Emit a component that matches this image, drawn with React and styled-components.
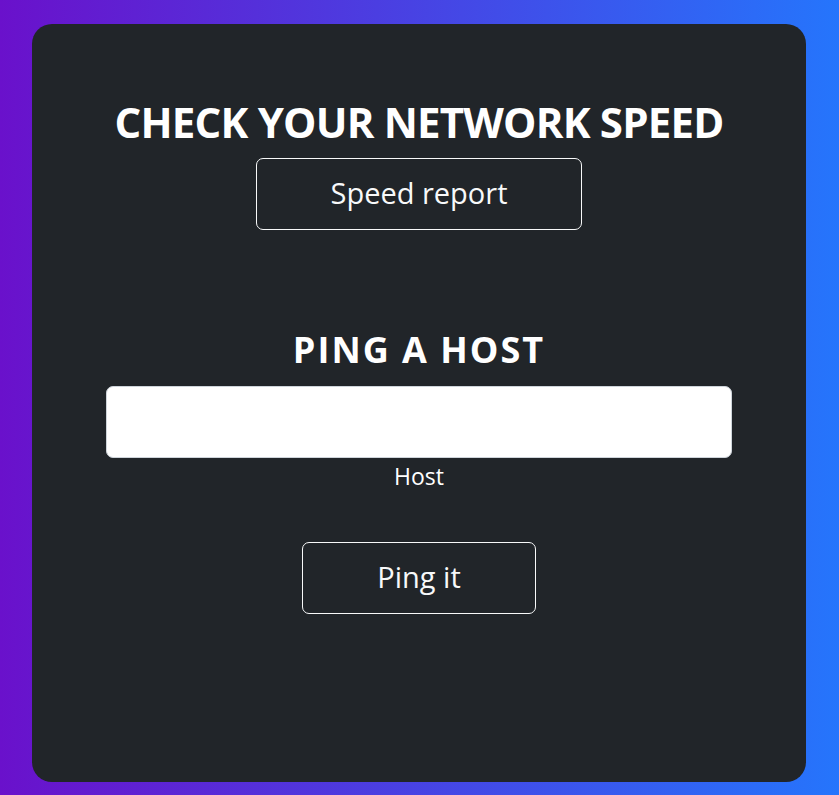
import React from "react";
import styled, { createGlobalStyle } from "styled-components";

const Global = createGlobalStyle`
  html, body { margin: 0; padding: 0; }
  body {
    font-family: "Open Sans", "Noto Sans", sans-serif;
    background: linear-gradient(90deg, #6a11cb 0%, #2575fc 100%);
    min-height: 795px;
  }
  * { box-sizing: border-box; }
`;

const Page = styled.div`
  min-height: 795px;
  padding: 24px 33px 13px 32px;
  display: flex;
`;

const Card = styled.main`
  flex: 1;
  height: 758px;
  background: #212529;
  border-radius: 20px;
  display: flex;
  flex-direction: column;
  align-items: center;
  padding: 73px 74px 0;
  color: #fff;
`;

const Title = styled.h1`
  margin: 0;
  font-weight: 700;
  font-size: ${(p) => p.$size}px;
  line-height: 1.2;
  letter-spacing: ${(p) => p.$ls}px;
  text-align: center;
  color: #fff;
`;

const OutlineButton = styled.button`
  font-family: inherit;
  background: transparent;
  color: #f8f9fa;
  border: 1px solid #f8f9fa;
  border-radius: 7px;
  height: 72px;
  width: ${(p) => p.$w}px;
  padding: 0 0 3px;
  font-size: 29px;
  font-weight: 400;
  margin-top: ${(p) => p.$mt}px;
  cursor: pointer;
`;

const Section = styled.section`
  width: 100%;
  display: flex;
  flex-direction: column;
  align-items: center;
  margin-top: ${(p) => p.$mt}px;
`;

const Input = styled.input`
  width: 100%;
  height: 72px;
  margin-top: 14px;
  border: 1px solid #ced4da;
  border-radius: 7px;
  background: #fff;
  font-family: inherit;
  font-size: 20px;
  padding: 0 16px;
`;

const Label = styled.label`
  margin-top: 2px;
  font-size: 23px;
  line-height: 32px;
  color: #fff;
`;

export default function App() {
  return (
    <>
      <Global />
      <Page>
        <Card>
          <Title $size={42} $ls={-0.8}>CHECK YOUR NETWORK SPEED</Title>
          <OutlineButton $w={326} $mt={11}>Speed report</OutlineButton>
          <Section $mt={98}>
            <Title $size={36} $ls={2}>PING A HOST</Title>
            <Input id="host" type="text" aria-label="Host" />
            <Label htmlFor="host">Host</Label>
            <OutlineButton $w={234} $mt={50}>Ping it</OutlineButton>
          </Section>
        </Card>
      </Page>
    </>
  );
}
